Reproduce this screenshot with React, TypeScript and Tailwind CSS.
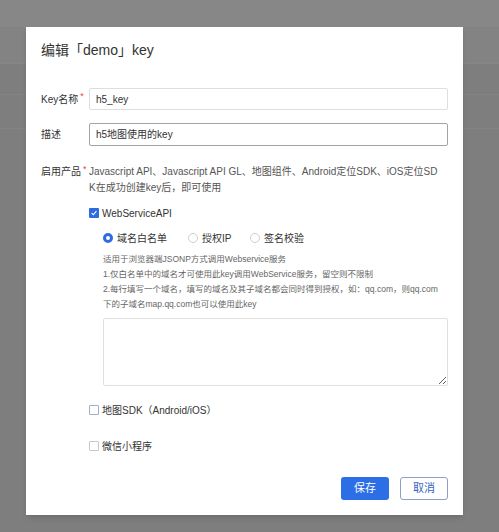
import React from "react";

const font = { fontFamily: '"Liberation Sans", "Noto Sans CJK SC", sans-serif' };

const Checkbox = ({ checked, tone }: { checked?: boolean; tone?: string }) =>
  checked ? (
    <span className="w-[10px] h-[10px] rounded-[1px] bg-[#2f6be0] flex items-center justify-center shrink-0">
      <svg viewBox="0 0 10 10" className="w-[8px] h-[8px]">
        <path d="M2 5.2 L4.2 7.2 L8 2.8" fill="none" stroke="white" strokeWidth="1.4" />
      </svg>
    </span>
  ) : (
    <span className={"w-[10px] h-[10px] rounded-[1px] border bg-white shrink-0 " + (tone || "border-[#c9c9c9]")} />
  );

const Radio = ({ checked }: { checked?: boolean }) =>
  checked ? (
    <span className="w-[10px] h-[10px] rounded-full border-[3px] border-[#2f6be0] bg-white shrink-0" />
  ) : (
    <span className="w-[10px] h-[10px] rounded-full border border-[#cfcfcf] bg-white shrink-0" />
  );

export default function App() {
  return (
    <div className="w-[499px] h-[532px] relative overflow-hidden bg-[#7e7e7e]" style={font}>
      <div className="h-[27px] bg-[#878787]" />
      <div className="h-[37px] bg-[#838383] border-b border-[#868686]" />
      <div className="h-[31px] border-b border-[#848484]" />
      <div className="h-[34px] border-b border-[#848484]" />

      <div className="absolute left-[26px] top-[27px] w-[437px] h-[488px] bg-white px-[15px] shadow-md">
        <div className="pt-[15px] text-[14px] leading-[16px] text-[#333]">编辑「demo」key</div>

        <div className="mt-[30px] flex items-center h-[22px]">
          <div className="w-[48px] text-[10px] text-[#333] flex items-start">
            Key名称<span className="text-[#e54545] text-[9px] leading-[8px] ml-[2px]">*</span>
          </div>
          <div className="flex-1 h-[22px] border border-[#dedede] rounded-[2px] px-[6px] flex items-center text-[10px] text-[#333]">
            h5_key
          </div>
        </div>

        <div className="mt-[13px] flex items-center h-[23px]">
          <div className="w-[48px] text-[10px] text-[#333]">描述</div>
          <div className="flex-1 h-[23px] border border-[#a3a3a3] rounded-[2px] px-[6px] flex items-center text-[10px] text-[#333]">
            h5地图使用的key
          </div>
        </div>

        <div className="mt-[18px] flex">
          <div className="w-[48px] text-[10px] leading-[16px] text-[#333] flex items-start">
            启用产品<span className="text-[#e54545] text-[9px] leading-[10px] ml-[2px]">*</span>
          </div>
          <div className="flex-1">
            <div className="text-[10px] leading-[16px] text-[#555] whitespace-nowrap">
              Javascript API、Javascript API GL、地图组件、Android定位SDK、iOS定位SD
              <br />
              K在成功创建key后，即可使用
            </div>

            <div className="mt-[9px] h-[16px] flex items-center gap-[3px] text-[10px] text-[#333]">
              <Checkbox checked />
              <span>WebServiceAPI</span>
            </div>

            <div className="ml-[14px]">
              <div className="mt-[9px] h-[16px] flex items-center text-[10px] text-[#333]">
                <div className="flex items-center gap-[4px] w-[85px]">
                  <Radio checked />
                  <span>域名白名单</span>
                </div>
                <div className="flex items-center gap-[4px] w-[62px]">
                  <Radio />
                  <span>授权IP</span>
                </div>
                <div className="flex items-center gap-[4px]">
                  <Radio />
                  <span>签名校验</span>
                </div>
              </div>

              <div className="mt-[6px] text-[8.5px] leading-[15px] text-[#666] whitespace-nowrap">
                <div>适用于浏览器端JSONP方式调用Webservice服务</div>
                <div>1.仅白名单中的域名才可使用此key调用WebService服务，留空则不限制</div>
                <div>2.每行填写一个域名，填写的域名及其子域名都会同时得到授权，如：qq.com，则qq.com</div>
                <div>下的子域名map.qq.com也可以使用此key</div>
              </div>

              <textarea className="mt-[6px] block w-full h-[68px] border border-[#e0e0e0] rounded-[2px] outline-none" />
            </div>

            <div className="mt-[16px] h-[16px] flex items-center gap-[3px] text-[10px] text-[#333]">
              <Checkbox tone="border-[#9fb0c8]" />
              <span>地图SDK（Android/iOS）</span>
            </div>

            <div className="mt-[20px] h-[16px] flex items-center gap-[3px] text-[10px] text-[#333]">
              <Checkbox />
              <span>微信小程序</span>
            </div>
          </div>
        </div>

        <div className="mt-[23px] flex justify-end gap-[11px]">
          <button className="w-[48px] h-[23px] rounded-[3px] bg-[#2b6ee6] text-white text-[11px]">保存</button>
          <button className="w-[48px] h-[23px] rounded-[3px] border border-[#8ea1c4] bg-white text-[#3563bd] text-[11px]">取消</button>
        </div>
      </div>
    </div>
  );
}
